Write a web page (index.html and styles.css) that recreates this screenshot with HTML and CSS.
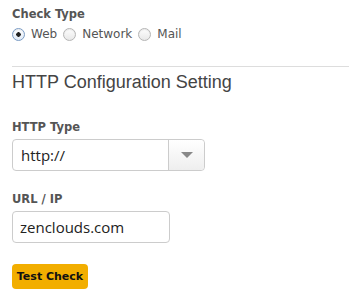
FILE: index.html
```html
<!DOCTYPE HTML>
<html>

<head>
    <meta name="viewport" content="width=device-width, initial-scale=1">
    <title>Check Settings</title>
    <link rel="stylesheet" href="styles.css">
</head>

<body>
    <div class="field">
        <label class="fieldLabel">Check Type</label>
        <div class="radioRow">
            <label class="radioOption"><input type="radio" name="checkType" checked> Web</label>
            <label class="radioOption"><input type="radio" name="checkType"> Network</label>
            <label class="radioOption"><input type="radio" name="checkType"> Mail</label>
        </div>
    </div>

    <h3 class="sectionTitle">HTTP Configuration Setting</h3>

    <div class="field">
        <label class="fieldLabel">HTTP Type</label>
        <div class="selectBox">
            <span class="selectValue">http://</span>
            <span class="selectArrow"><span class="caret"></span></span>
        </div>
    </div>

    <div class="field">
        <label class="fieldLabel">URL / IP</label>
        <input type="text" class="textInput" value="zenclouds.com">
    </div>

    <button class="testButton">Test Check</button>
</body>

</html>
```

FILE: styles.css
```css
html {
    font-family: "DejaVu Sans", sans-serif;
    color: #555;
}

body {
    margin: 0;
    padding: 7px 1px 0 12px;
}

.fieldLabel {
    display: block;
    font-size: 11.5px;
    font-weight: bold;
    line-height: 15px;
    color: #555;
}

.radioRow {
    display: flex;
    margin-top: 5px;
    font-size: 12px;
    line-height: 15px;
}

.radioOption {
    display: flex;
    align-items: center;
    margin-right: 6px;
    color: #555;
}

.radioOption input {
    -webkit-appearance: none;
    appearance: none;
    width: 13px;
    height: 13px;
    margin: 0 6px 0 0;
    border: 1px solid #b5b5b5;
    border-radius: 50%;
    background: linear-gradient(#fdfdfd, #e8e8e8);
    box-shadow: inset 0 1px 1px rgba(0, 0, 0, 0.08);
}

.radioOption input:checked {
    border-color: #7a9bc4;
    background: radial-gradient(circle, #222 0, #222 2px, transparent 2.5px), linear-gradient(#ffffff, #dfe9f5);
}

.sectionTitle {
    margin: 24px 0 0 0;
    padding-top: 3px;
    border-top: 1px solid #ddd;
    font-family: "Liberation Sans", sans-serif;
    font-weight: normal;
    font-size: 18px;
    line-height: 24px;
    color: #444;
}

.sectionTitle + .field {
    margin-top: 26px;
}

.field + .field {
    margin-top: 21px;
}

.selectBox {
    display: flex;
    width: 191px;
    height: 30px;
    margin-top: 4px;
    border: 1px solid #ccc;
    border-radius: 4px;
    background: #fff;
}

.selectValue {
    flex: 1;
    padding-left: 8px;
    font-family: "Open Sans", sans-serif;
    font-size: 15px;
    line-height: 30px;
    color: #222;
}

.selectArrow {
    display: flex;
    align-items: center;
    justify-content: center;
    width: 35px;
    border-left: 1px solid #ccc;
    border-radius: 0 4px 4px 0;
    background: linear-gradient(#ffffff, #eeeeee);
}

.caret {
    width: 0;
    height: 0;
    border-left: 6px solid transparent;
    border-right: 6px solid transparent;
    border-top: 6px solid #888;
}

.textInput {
    display: block;
    box-sizing: border-box;
    width: 158px;
    height: 32px;
    margin: 4px 0 0 0;
    padding: 0 7px;
    border: 1px solid #ccc;
    border-radius: 4px;
    font-family: "Open Sans", sans-serif;
    font-size: 15px;
    color: #222;
}

.testButton {
    display: block;
    margin-top: 21px;
    width: 76px;
    height: 25px;
    padding: 0;
    border: 0;
    border-radius: 4px;
    background-color: #f2ae00;
    font-family: "DejaVu Sans", sans-serif;
    font-size: 11px;
    font-weight: bold;
    color: #111;
}
```
